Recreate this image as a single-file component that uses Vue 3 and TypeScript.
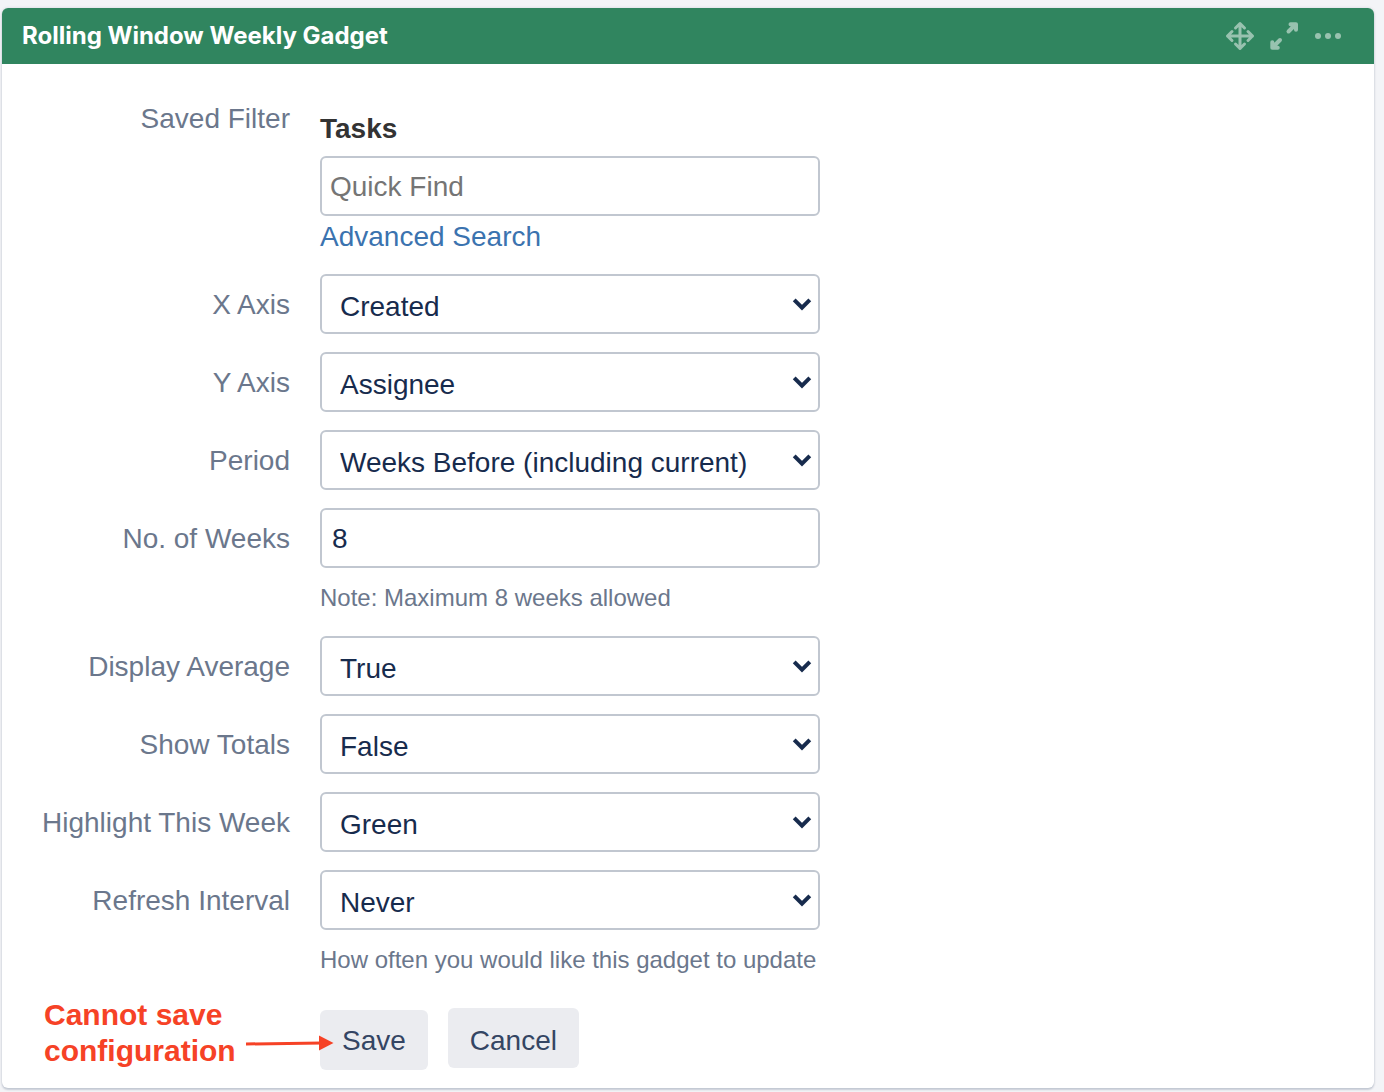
<script setup lang="ts">
import { reactive, ref } from 'vue'

interface Field {
  id: string
  label: string
  kind: 'select' | 'text'
  options?: string[]
  hint?: string
}

const fields: Field[] = [
  { id: 'x-axis', label: 'X Axis', kind: 'select', options: ['Created', 'Updated', 'Resolved'] },
  { id: 'y-axis', label: 'Y Axis', kind: 'select', options: ['Assignee', 'Reporter', 'Status'] },
  { id: 'period', label: 'Period', kind: 'select', options: ['Weeks Before (including current)', 'Weeks Before', 'Weeks After'] },
  { id: 'weeks', label: 'No. of Weeks', kind: 'text', hint: 'Note: Maximum 8 weeks allowed' },
  { id: 'average', label: 'Display Average', kind: 'select', options: ['True', 'False'] },
  { id: 'totals', label: 'Show Totals', kind: 'select', options: ['False', 'True'] },
  { id: 'highlight', label: 'Highlight This Week', kind: 'select', options: ['Green', 'Blue', 'None'] },
  {
    id: 'refresh',
    label: 'Refresh Interval',
    kind: 'select',
    options: ['Never', 'Every 15 Minutes', 'Every 30 Minutes', 'Every 1 Hour'],
    hint: 'How often you would like this gadget to update',
  },
]

const values = reactive<Record<string, string>>({
  'x-axis': 'Created',
  'y-axis': 'Assignee',
  period: 'Weeks Before (including current)',
  weeks: '8',
  average: 'True',
  totals: 'False',
  highlight: 'Green',
  refresh: 'Never',
})

const quickFind = ref('')
</script>

<template>
  <main class="gadget">
    <header class="gadget-header">
      <h1 class="title">Rolling Window Weekly Gadget</h1>
      <div class="tools">
        <button type="button" class="tool" aria-label="Move">
          <svg viewBox="0 0 32 32" width="32" height="32">
            <path d="M16 3.500v25M3.500 16h25M11.500 8l4.500-4.500 4.500 4.500M11.500 24l4.500 4.500 4.500-4.500M8 11.500l-4.500 4.500 4.500 4.500M24 11.500l4.500 4.500-4.500 4.500" />
          </svg>
        </button>
        <button type="button" class="tool" aria-label="Maximize">
          <svg viewBox="0 0 32 32" width="32" height="32">
            <path class="thick" d="M20.500 11.500l7-7M22.500 4.300h5.500v5.500M12 20l-7 7M4.300 22.200v5.500h5.500" />
          </svg>
        </button>
        <button type="button" class="tool" aria-label="More actions">
          <svg viewBox="0 0 32 32" width="32" height="32">
            <g class="dots">
              <circle cx="6" cy="16" r="3" />
              <circle cx="16" cy="16" r="3" />
              <circle cx="26" cy="16" r="3" />
            </g>
          </svg>
        </button>
      </div>
    </header>

    <form class="form" @submit.prevent>
      <div class="row">
        <label class="label" for="quick-find">Saved Filter</label>
        <div class="control">
          <strong class="filter-name">Tasks</strong>
          <input id="quick-find" v-model="quickFind" class="box search" type="text" placeholder="Quick Find" />
          <a class="link" href="#">Advanced Search</a>
        </div>
      </div>

      <div v-for="field in fields" :key="field.id" class="row">
        <label class="label" :for="field.id">{{ field.label }}</label>
        <div class="control">
          <div v-if="field.kind === 'select'" class="select-wrap">
            <select :id="field.id" v-model="values[field.id]" class="box select">
              <option v-for="option in field.options" :key="option" :value="option">{{ option }}</option>
            </select>
            <svg class="chevron" viewBox="0 0 20 14" width="20" height="14" aria-hidden="true">
              <path d="M2.200 2.800l7.800 7.800 7.800-7.800" />
            </svg>
          </div>
          <input v-else :id="field.id" v-model="values[field.id]" class="box number" type="text" />
          <p v-if="field.hint" class="hint">{{ field.hint }}</p>
        </div>
      </div>

      <div class="actions">
        <div class="callout">
          <p class="callout-text">Cannot save<br />configuration</p>
          <svg class="callout-arrow" viewBox="0 0 88 20" width="88" height="20" aria-hidden="true">
            <path class="shaft" d="M0 11l76-1" />
            <path class="head" d="M73 2.500l14.500 7.500L73 17.500z" />
          </svg>
        </div>
        <button type="submit" class="button save">Save</button>
        <button type="button" class="button">Cancel</button>
      </div>
    </form>
  </main>
</template>

<style>
body {
  background: #f3f4f7;
}
</style>

<style scoped>
.gadget {
  margin: 8px 10px 4px 2px;
  border-radius: 6px;
  background: #fff;
  box-shadow: 0 2px 2px rgba(9, 30, 66, 0.16), 0 0 3px rgba(9, 30, 66, 0.14);
  font-family: "Liberation Sans", Arial, sans-serif;
  font-size: 28px;
  line-height: 32px;
  color: #172b4d;
}

.gadget-header {
  display: flex;
  align-items: center;
  justify-content: space-between;
  height: 56px;
  padding: 0 30px 0 20px;
  border-radius: 6px 6px 0 0;
  background: #30855f;
}

.title {
  margin: 0;
  font-family: Inter, sans-serif;
  font-size: 24px;
  font-weight: 700;
  font-optical-sizing: none;
  color: #fff;
}

.tools {
  display: flex;
  gap: 12px;
}

.tool {
  display: flex;
  padding: 0;
  border: 0;
  background: none;
}

.tool path {
  fill: none;
  stroke: #98c2af;
  stroke-width: 3;
  stroke-linecap: round;
  stroke-linejoin: round;
}

.tool .thick {
  stroke-width: 4;
}

.dots {
  fill: #98c2af;
}

.form {
  display: flex;
  flex-direction: column;
  gap: 18px;
  padding: 24px 20px 20px 0;
}

.row {
  display: grid;
  grid-template-columns: 288px minmax(0, 500px);
  column-gap: 30px;
}

.label {
  height: 60px;
  line-height: 62px;
  text-align: right;
  color: #6b778c;
}

.control {
  display: flex;
  flex-direction: column;
}

.filter-name {
  padding: 25px 0 11px;
  color: #333;
}

.box {
  box-sizing: border-box;
  width: 100%;
  height: 60px;
  margin: 0;
  border: 2px solid #c1c7d0;
  border-radius: 6px;
  background: #fff;
  font: inherit;
  color: #172b4d;
}

.search {
  padding: 2px 8px 0;
}

.search::placeholder {
  color: #757575;
  opacity: 1;
}

.number {
  padding: 2px 10px 0;
}

.select-wrap {
  display: grid;
  align-items: center;
}

.select-wrap > * {
  grid-area: 1 / 1;
}

.select {
  appearance: none;
  padding: 6px 40px 0 18px;
}

.chevron {
  justify-self: end;
  margin-right: 8px;
  pointer-events: none;
}

.chevron path {
  fill: none;
  stroke: #172b4d;
  stroke-width: 4;
}

.link {
  align-self: flex-start;
  height: 40px;
  line-height: 42px;
  color: #3b73af;
  text-decoration: none;
}

.hint {
  margin: 14px 0 4px;
  font-size: 24px;
  white-space: nowrap;
  color: #6b778c;
}

.actions {
  position: relative;
  display: flex;
  align-items: flex-start;
  gap: 20px;
  padding: 10px 0 0 318px;
}

.button {
  height: 60px;
  padding: 6px 22px 0;
  border: 0;
  border-radius: 6px;
  background: #ebecf0;
  font: inherit;
  color: #344563;
}

.save {
  margin: 2px 0 -2px;
  padding-top: 2px;
}

.callout {
  position: absolute;
  top: -1px;
  left: 42px;
  display: flex;
  align-items: flex-end;
  gap: 10px;
}

.callout-text {
  margin: 0;
  font-size: 30px;
  font-weight: 700;
  line-height: 36px;
  color: #f64226;
}

.callout-arrow {
  margin-bottom: 16px;
}

.shaft {
  fill: none;
  stroke: #f64226;
  stroke-width: 3;
}

.head {
  fill: #f64226;
}
</style>
